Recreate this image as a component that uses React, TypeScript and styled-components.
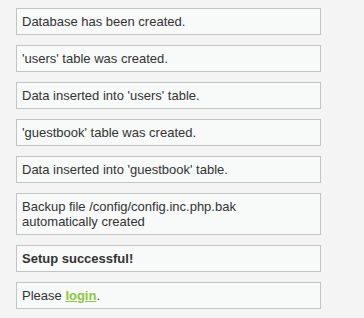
import styled, { createGlobalStyle } from "styled-components";

const GlobalStyle = createGlobalStyle`
  html, body {
    margin: 0;
    padding: 0;
    background: #f4f4f4;
  }
  body {
    font-family: Arial, "Liberation Sans", sans-serif;
    font-size: 13px;
    color: #333333;
  }
`;

const Page = styled.div`
  display: flex;
  flex-direction: column;
  gap: 10px;
  padding: 8px 0 0 16px;
  width: 305px;
`;

const Message = styled.div<{ $bold?: boolean }>`
  box-sizing: border-box;
  width: 305px;
  padding: 5px 5px;
  line-height: 15px;
  background: #f8f9f9;
  border: 1px solid #c3c3c3;
  font-weight: ${(p) => (p.$bold ? "bold" : "normal")};
`;

const Link = styled.a`
  color: #8dc63f;
  font-weight: bold;
  text-decoration: underline;
`;

const messages = [
  "Database has been created.",
  "'users' table was created.",
  "Data inserted into 'users' table.",
  "'guestbook' table was created.",
  "Data inserted into 'guestbook' table.",
  "Backup file /config/config.inc.php.bak automatically created",
];

export default function App() {
  return (
    <>
      <GlobalStyle />
      <Page>
        {messages.map((m) => (
          <Message key={m}>{m}</Message>
        ))}
        <Message $bold>Setup successful!</Message>
        <Message>
          Please <Link href="#">login</Link>.
        </Message>
      </Page>
    </>
  );
}
